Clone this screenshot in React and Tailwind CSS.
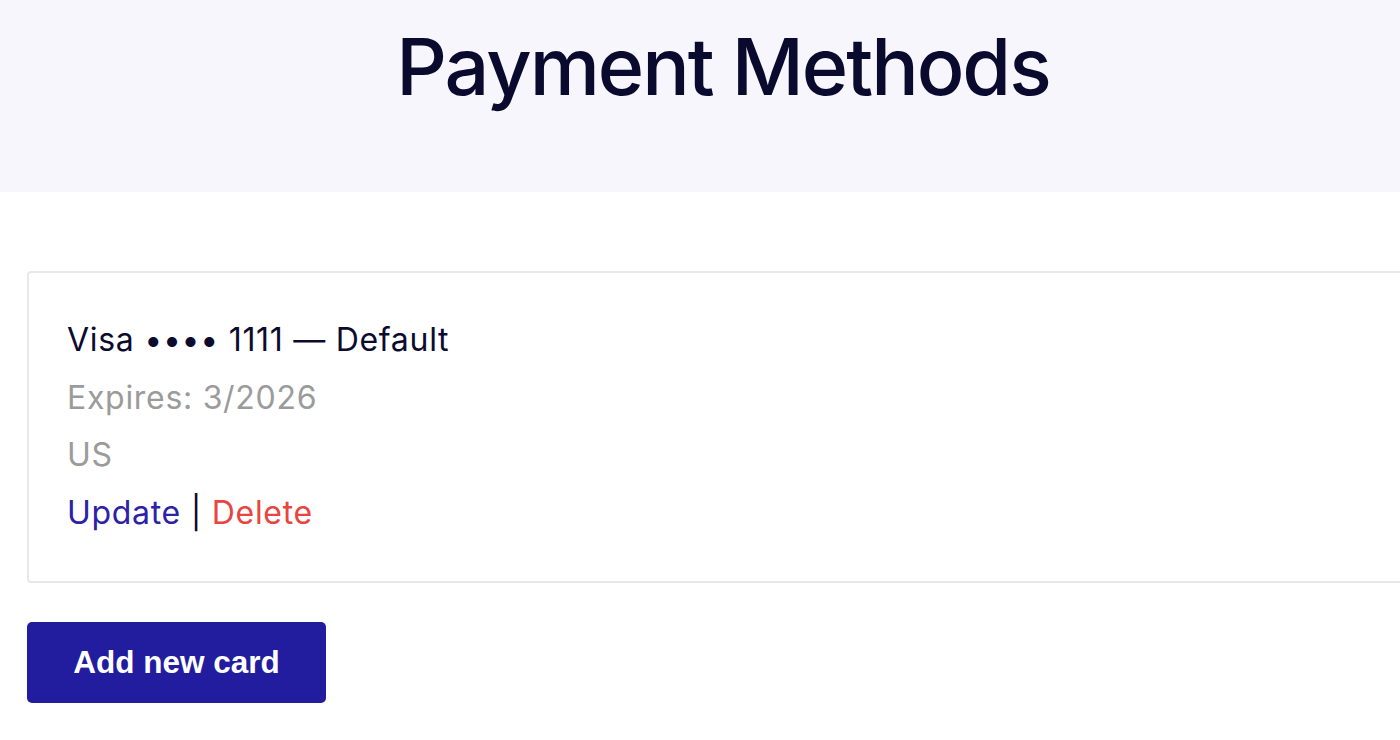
export default function App() {
  return (
    <div className="w-[1400px] h-[740px] overflow-hidden bg-white" style={{ fontFamily: "Inter, 'Noto Sans', sans-serif" }}>
      <div className="w-[1446px]">
        <header className="h-[192px] bg-[#f7f6fc] flex justify-center pt-[16px]">
          <h1 className="text-[79px] leading-[100px] font-medium text-[#0a0a2e] tracking-[-2px]">Payment Methods</h1>
        </header>
        <main className="px-[27px] pt-[79px]">
          <div className="border-2 border-[#e8e8e8] rounded-[4px] px-[38px] pt-[38px] pb-[40px] text-[32px] leading-[57.6px] tracking-[0.7px]">
            <p className="text-[#0b0b2e]">Visa •••• 1111 — Default</p>
            <p className="text-[#9b9b9b]">Expires: 3/2026</p>
            <p className="text-[#9b9b9b]">US</p>
            <p>
              <a className="text-[#2a22a8]">Update</a>
              <span className="text-[#0b0b2e]"> | </span>
              <a className="text-[#e9443f]">Delete</a>
            </p>
          </div>
          <button className="mt-[39px] w-[299px] h-[81px] rounded-[5px] bg-[#221c9e] text-white font-bold text-[31.5px]" style={{ fontFamily: "'Liberation Sans', Arial, sans-serif" }}>
            Add new card
          </button>
        </main>
      </div>
    </div>
  );
}
